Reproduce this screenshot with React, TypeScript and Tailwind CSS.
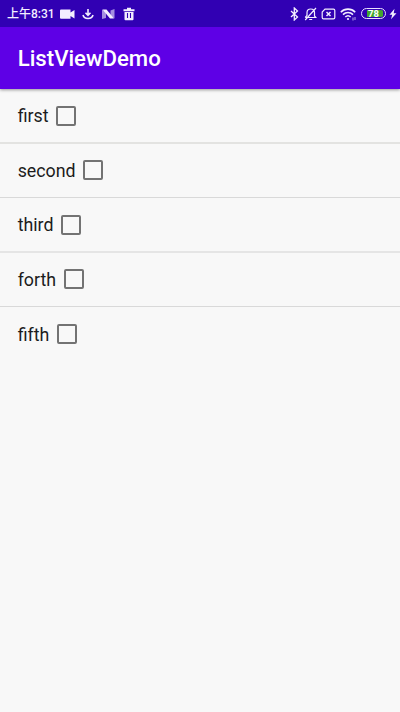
import React from "react";

const items = [
  { label: "first", row: "h-[55px] border-b-2 border-[#e3e3e1]" },
  { label: "second", row: "h-[54px] border-b border-[#d9d9d9] pb-px" },
  { label: "third", row: "h-[55px] border-b-2 border-[#e5e5e5]" },
  { label: "forth", row: "h-[54px] border-b border-[#d9d9d9] pb-px" },
  { label: "fifth", row: "h-[54px]" },
];

function StatusBar() {
  return (
    <div className="flex h-[26.5px] items-center bg-[#3100b3] pt-px text-[#f3eeff]">
      <span className="ml-[7px] w-[47px] whitespace-nowrap font-['Roboto','Noto_Sans_CJK_SC',sans-serif] text-[12px] font-medium leading-4">上午8:31</span>
      <svg className="ml-[6px] shrink-0" width="15" height="12" viewBox="0 0 15 12" fill="currentColor">
        <path d="M1 1.500h9.500v3L14.500 2v8.500L10.500 8v2.800H1a1 1 0 0 1-1-1V2.500a1 1 0 0 1 1-1z" />
      </svg>
      <svg className="ml-[7px] shrink-0" width="12" height="12" viewBox="0 0 12 12" fill="none" stroke="currentColor" strokeWidth="1.600">
        <path d="M6 1v6M3.500 4.800 6 7.300l2.500-2.500M1 7c.6 2.400 2.400 3.500 5 3.500S10.400 9.400 11 7" />
      </svg>
      <svg className="ml-[7px] shrink-0" width="14" height="12" viewBox="0 0 14 12" fill="currentColor">
        <path opacity=".6" d="M1 1.500 5 3.800V10L1 11zM9.500 2.500l4-1.500v9.500L9.500 8z" />
        <path d="M1.500 1.500h4L13 10.500H9z" />
      </svg>
      <svg className="ml-[7.500px] shrink-0" width="12" height="14" viewBox="0 0 12 14">
        <path fill="currentColor" d="M4 .8h4v1.400h3.500v2H.5v-2H4zM1.500 5h9v7.200a1 1 0 0 1-1 1h-7a1 1 0 0 1-1-1z" />
        <path d="M4.500 6v5M7.500 6v5" stroke="#3100b3" strokeWidth="1.100" />
      </svg>
      <div className="flex-1" />
      <svg className="shrink-0" width="9" height="14" viewBox="0 0 9 14" fill="none" stroke="currentColor" strokeWidth="1.300">
        <path d="m1 4 6.500 6-3.200 3V1l3.200 3L1 10" />
      </svg>
      <svg className="ml-[5px] shrink-0" width="13" height="14" viewBox="0 0 13 14" fill="none" stroke="currentColor" strokeWidth="1.200">
        <path d="M1.200 10.500h10.600L10.500 9V5.500C10.500 3.400 9 2 6.800 2S3 3.400 3 5.500V8.500L1.200 10.500M5.200 12.500h3M12 1 1.200 13" />
      </svg>
      <svg className="ml-[4px] shrink-0" width="15" height="12" viewBox="0 0 15 12" fill="none" stroke="currentColor" strokeWidth="1.200">
        <path d="M4 1.200h8.500a1.300 1.300 0 0 1 1.300 1.300v7a1.300 1.300 0 0 1-1.300 1.300h-10A1.300 1.300 0 0 1 1.200 9.500V4z" />
        <path strokeWidth="1.500" d="m5.500 4 4 4m0-4-4 4" />
      </svg>
      <svg className="ml-[4px] shrink-0" width="17" height="14" viewBox="0 0 17 14" fill="none" stroke="currentColor" strokeWidth="1.600">
        <path d="M.8 5.200C4.800 1.100 11.200 1.100 15.200 5.200M3 7.600c2.800-2.800 7.200-2.800 10 0M5.300 10c1.600-1.500 3.800-1.500 5.400 0" />
        <circle cx="8" cy="12" r="1.100" fill="currentColor" stroke="none" />
        <path strokeWidth="1" d="M13 10.500v3M15 10v3" opacity=".7" />
      </svg>
      <div className="ml-[4px] flex h-[11px] w-[25px] shrink-0 items-center justify-center rounded-full border border-[#e9e0ff]">
        <div className="flex h-[7px] w-[21px] items-center justify-center rounded-full bg-[linear-gradient(90deg,#3100b3_20%,#43a52e_20%,#43a52e_94%,#3100b3_94%)] font-['Roboto',sans-serif] text-[9.5px] font-bold leading-none text-white">78</div>
      </div>
      <svg className="ml-[3px] mr-[3px] shrink-0" width="8" height="12" viewBox="0 0 8 12" fill="currentColor">
        <path d="M5.500.8.5 6.700h2.700L2 11.200l5.500-6H4.700z" />
      </svg>
    </div>
  );
}

export default function App() {
  return (
    <div className="flex h-[712px] w-[400px] flex-col overflow-hidden bg-[#f8f8f8] font-['Roboto',sans-serif]">
      <header className="shrink-0 shadow-[0_1px_3px_rgba(0,0,0,0.4)]">
        <StatusBar />
        <div className="flex h-[62.5px] items-center bg-[#5e00e6] pl-[17.7px] pt-px">
          <h1 className="text-[22.2px] font-medium leading-none text-white">ListViewDemo</h1>
        </div>
      </header>
      <ul>
        {items.map(({ label, row }) => (
          <li key={label} className={`flex items-center pl-[17.7px] text-[17.8px] text-[#1c1c1c] ${row}`}>
            <span className="pt-px leading-none">{label}</span>
            <span className="ml-[7.7px] h-[20px] w-[20px] rounded-[2px] border-2 border-[#737373]" />
          </li>
        ))}
      </ul>
    </div>
  );
}
